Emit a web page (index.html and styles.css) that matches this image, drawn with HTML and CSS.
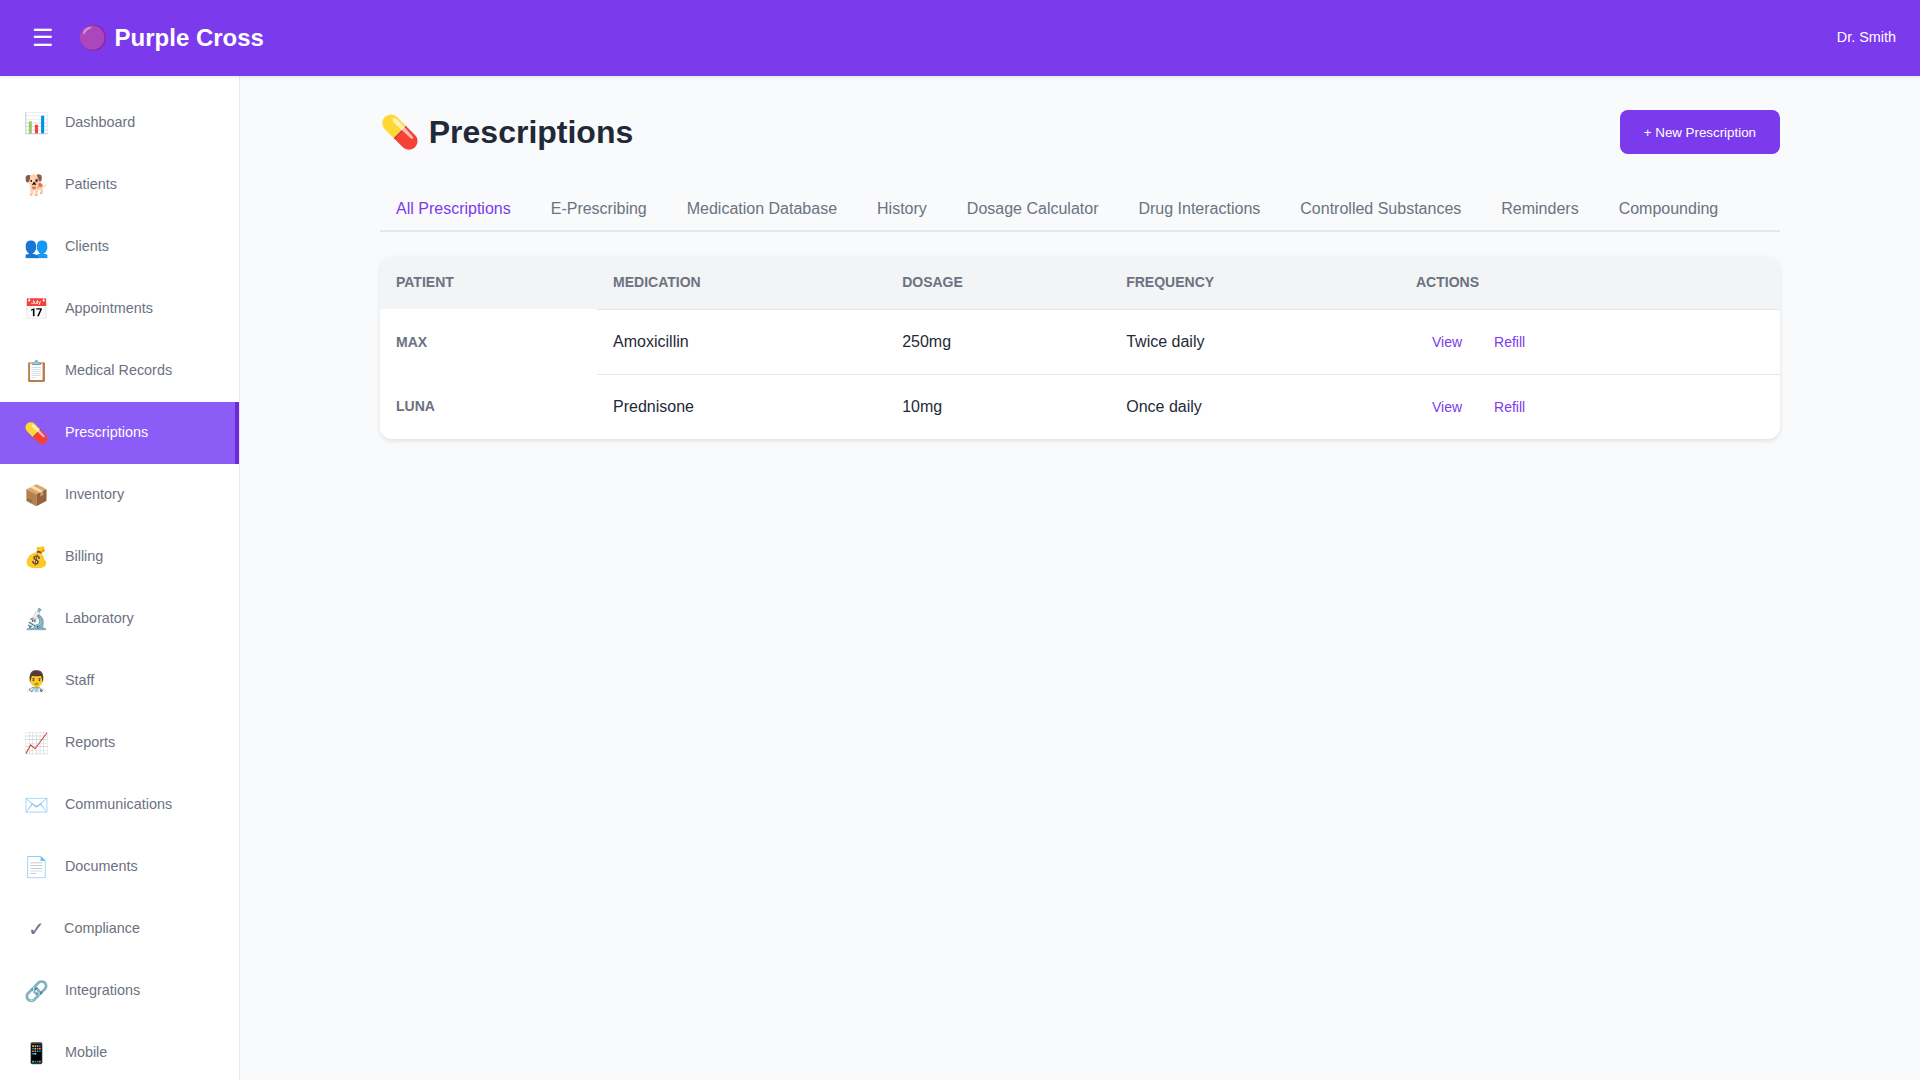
FILE: index.html
```html
<!DOCTYPE html>
<html lang="en">
<head>
<meta charset="utf-8">
<title>Purple Cross - Prescriptions</title>
<link rel="stylesheet" href="styles.css">
</head>
<body>
<header class="topbar">
  <div class="brand">
    <button class="menu-btn" type="button">☰</button>
    <div class="logo">🟣 Purple Cross</div>
  </div>
  <div class="user">Dr. Smith</div>
</header>
<div class="shell">
  <nav class="sidebar">
    <a class="nav-item"><span class="nav-icon">📊</span><span class="nav-label">Dashboard</span></a>
    <a class="nav-item"><span class="nav-icon">🐕</span><span class="nav-label">Patients</span></a>
    <a class="nav-item"><span class="nav-icon">👥</span><span class="nav-label">Clients</span></a>
    <a class="nav-item"><span class="nav-icon">📅</span><span class="nav-label">Appointments</span></a>
    <a class="nav-item"><span class="nav-icon">📋</span><span class="nav-label">Medical Records</span></a>
    <a class="nav-item active"><span class="nav-icon">💊</span><span class="nav-label">Prescriptions</span></a>
    <a class="nav-item"><span class="nav-icon">📦</span><span class="nav-label">Inventory</span></a>
    <a class="nav-item"><span class="nav-icon">💰</span><span class="nav-label">Billing</span></a>
    <a class="nav-item"><span class="nav-icon">🔬</span><span class="nav-label">Laboratory</span></a>
    <a class="nav-item"><span class="nav-icon">👨‍⚕️</span><span class="nav-label">Staff</span></a>
    <a class="nav-item"><span class="nav-icon">📈</span><span class="nav-label">Reports</span></a>
    <a class="nav-item"><span class="nav-icon">✉️</span><span class="nav-label">Communications</span></a>
    <a class="nav-item"><span class="nav-icon">📄</span><span class="nav-label">Documents</span></a>
    <a class="nav-item"><span class="nav-icon">✓</span><span class="nav-label">Compliance</span></a>
    <a class="nav-item"><span class="nav-icon">🔗</span><span class="nav-label">Integrations</span></a>
    <a class="nav-item"><span class="nav-icon">📱</span><span class="nav-label">Mobile</span></a>
  </nav>
  <main class="main">
    <div class="content">
      <div class="page-head">
        <h1 class="page-title">💊 Prescriptions</h1>
        <button class="primary-btn" type="button">+ New Prescription</button>
      </div>
      <div class="tabs">
        <a class="tab active">All Prescriptions</a>
        <a class="tab">E-Prescribing</a>
        <a class="tab">Medication Database</a>
        <a class="tab">History</a>
        <a class="tab">Dosage Calculator</a>
        <a class="tab">Drug Interactions</a>
        <a class="tab">Controlled Substances</a>
        <a class="tab">Reminders</a>
        <a class="tab">Compounding</a>
      </div>
      <div class="card">
        <table class="data-table">
          <thead>
            <tr><th>Patient</th><th>Medication</th><th>Dosage</th><th>Frequency</th><th>Actions</th></tr>
          </thead>
          <tbody>
            <tr>
              <th scope="row">Max</th><td>Amoxicillin</td><td>250mg</td><td>Twice daily</td>
              <td><a class="link-btn">View</a><a class="link-btn">Refill</a></td>
            </tr>
            <tr>
              <th scope="row">Luna</th><td>Prednisone</td><td>10mg</td><td>Once daily</td>
              <td><a class="link-btn">View</a><a class="link-btn">Refill</a></td>
            </tr>
          </tbody>
        </table>
      </div>
    </div>
  </main>
</div>
</body>
</html>
```

FILE: styles.css
```css
* { box-sizing: border-box; }
html, body { height: 100%; }
body {
  margin: 0;
  overflow: hidden;
  background: #f9fafb;
  color: #1f2937;
  font-family: "Liberation Sans", Arial, "Noto Color Emoji", sans-serif;
}
.topbar {
  position: relative;
  z-index: 2;
  display: flex;
  align-items: center;
  justify-content: space-between;
  height: 76px;
  padding: 16px 24px;
  background: #7c3aed;
  color: #fff;
  box-shadow: 0 1px 3px rgba(0, 0, 0, 0.1);
}
.brand { display: flex; align-items: center; gap: 16px; }
.menu-btn {
  padding: 8px;
  border: 0;
  background: none;
  color: #fff;
  font: inherit;
  font-size: 24px;
}
.logo { font-size: 24px; font-weight: 700; }
.user { font-size: 14.4px; line-height: 16px; margin-bottom: 2px; }
.shell { display: flex; height: 1004px; }
.sidebar {
  flex: 0 0 240px;
  padding-top: 16px;
  overflow: hidden;
  background: #fff;
  border-right: 1px solid #e5e7eb;
}
.nav-item {
  display: flex;
  align-items: center;
  gap: 16px;
  height: 62px;
  padding: 0 24px;
  color: #6b7280;
  font-size: 14.4px;
}
.nav-item.active {
  background: #8b5cf6;
  border-right: 4px solid #6d28d9;
  color: #fff;
}
.nav-icon { min-width: 24px; font-size: 20px; text-align: center; }
.nav-label { margin-bottom: 2px; }
.main { flex: 1; padding: 32px; }
.content { max-width: 1400px; margin: 0 auto; }
.page-head {
  display: flex;
  align-items: center;
  justify-content: space-between;
  margin-bottom: 32px;
}
.page-title { margin: 0; color: #1f2937; font-size: 32px; font-weight: 700; line-height: 48px; }
.primary-btn {
  height: 44px;
  padding: 0 24px;
  border: 0;
  border-radius: 8px;
  background: #7c3aed;
  color: #fff;
  font: inherit;
  font-size: 13.333px;
}
.tabs {
  display: flex;
  gap: 8px;
  margin-bottom: 24px;
  border-bottom: 2px solid #e5e7eb;
}
.tab { padding: 12px 16px; color: #6b7280; font-size: 16px; }
.tab.active { color: #7c3aed; }
.card {
  overflow: hidden;
  border-radius: 12px;
  background: #fff;
  box-shadow: 0 2px 4px rgba(0, 0, 0, 0.1);
}
.data-table { width: 100%; border-collapse: collapse; }
.data-table th {
  padding: 16px;
  color: #6b7280;
  font-size: 14px;
  font-weight: 700;
  text-align: left;
  text-transform: uppercase;
}
.data-table thead th {
  height: 53px;
  padding-top: 18px;
  padding-bottom: 0;
  background: #f3f4f6;
  vertical-align: top;
}
.data-table tbody th { background: #fff; }
.data-table td {
  padding: 16px;
  border-top: 1px solid #e5e7eb;
  font-size: 16px;
  color: #1f2937;
}
.link-btn {
  display: inline-block;
  padding: 8px 16px;
  color: #7c3aed;
  font-size: 14px;
}
```
